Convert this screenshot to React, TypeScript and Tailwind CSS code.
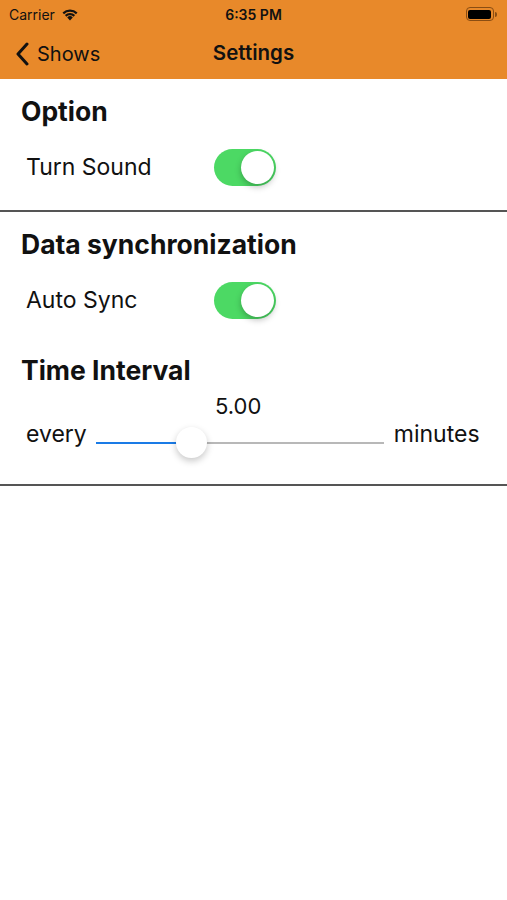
import React from 'react'

function Toggle() {
  return (
    <div className="relative h-[37px] w-[62px] rounded-full bg-[#4cd964]">
      <div className="absolute right-[2px] top-[2px] h-[33px] w-[33px] rounded-full bg-white shadow-[0_3px_6px_rgba(0,0,0,0.25)]" />
    </div>
  )
}

function Wifi() {
  return (
    <svg width="18" height="13" viewBox="0 0 18 13">
      <path d="M9 12.5 L6.2 9.4 A4 4 0 0 1 11.8 9.4 Z" fill="#111" />
      <path d="M3.9 7.1 A7.4 7.4 0 0 1 14.1 7.1 L12.6 8.7 A5.2 5.2 0 0 0 5.4 8.7 Z" fill="#111" />
      <path d="M1.5 4.6 A10.8 10.8 0 0 1 16.5 4.6 L15 6.2 A8.6 8.6 0 0 0 3 6.2 Z" fill="#111" />
    </svg>
  )
}

export default function App() {
  return (
    <div className="min-h-[900px] w-[507px] bg-white font-['Inter','Liberation_Sans',sans-serif] text-[#111]">
      {/* status + nav */}
      <div className="bg-[#e8892a]">
        <div className="flex h-[28px] items-center justify-between px-[9px] text-[14px]">
          <div className="flex w-[120px] items-center gap-[6px]">
            <span>Carrier</span>
            <Wifi />
          </div>
          <span className="font-semibold">6:35 PM</span>
          <div className="flex w-[120px] justify-end pr-[1px]">
            <div className="flex items-center">
              <div className="flex h-[14px] w-[28px] items-center rounded-[4px] border border-[#8a4d12] p-[1.5px]">
                <div className="h-full w-full rounded-[2px] bg-black" />
              </div>
              <div className="ml-[1px] h-[5px] w-[2px] rounded-r-sm bg-[#8a4d12]" />
            </div>
          </div>
        </div>
        <div className="relative flex h-[51px] items-center">
          <div className="flex items-center pl-[15px]">
            <svg width="14" height="24" viewBox="0 0 14 24">
              <path d="M12 2 L3 12 L12 22" fill="none" stroke="#111" strokeWidth="3" strokeLinecap="round" strokeLinejoin="round" />
            </svg>
            <span className="ml-[8px] text-[20px]">Shows</span>
          </div>
          <div className="absolute left-0 right-0 text-center text-[20.5px] font-semibold">Settings</div>
        </div>
      </div>

      {/* option */}
      <div className="border-b-2 border-[#555] pb-[24px] pl-[21px] pt-[16px]">
        <div className="text-[26.5px] font-bold leading-[32px]">Option</div>
        <div className="mt-[22px] flex items-center">
          <span className="w-[193px] pl-[5px] text-[23px]">Turn Sound</span>
          <Toggle />
        </div>
      </div>

      {/* data sync */}
      <div className="border-b-2 border-[#555] pb-[36px] pl-[21px] pt-[16px]">
        <div className="text-[26.5px] font-bold leading-[32px]">Data synchronization</div>
        <div className="mt-[22px] flex items-center">
          <span className="w-[193px] pl-[5px] text-[23px]">Auto Sync</span>
          <Toggle />
        </div>
        <div className="mt-[35px] text-[26.5px] font-bold leading-[32px]">Time Interval</div>
        <div className="mt-[7px] pl-[194px] text-[22px] leading-[26px]">5.00</div>
        <div className="mt-[1px] flex h-[28px] items-start">
          <span className="pl-[5px] text-[23px] leading-[28px]">every</span>
          <div className="relative ml-[9px] h-[28px] w-[288px]">
            <div className="absolute left-0 right-0 top-[22px] flex h-[2px]">
              <div className="h-[2px] w-[80px] bg-[#1a7be6]" />
              <div className="h-[2px] flex-1 bg-[#b8b8b8]" />
            </div>
            <div className="absolute left-[80px] top-[7px] h-[31px] w-[31px] rounded-full bg-white shadow-[0_3px_7px_rgba(0,0,0,0.22)]" />
          </div>
          <span className="ml-[10px] text-[23px] leading-[28px]">minutes</span>
        </div>
      </div>
    </div>
  )
}
